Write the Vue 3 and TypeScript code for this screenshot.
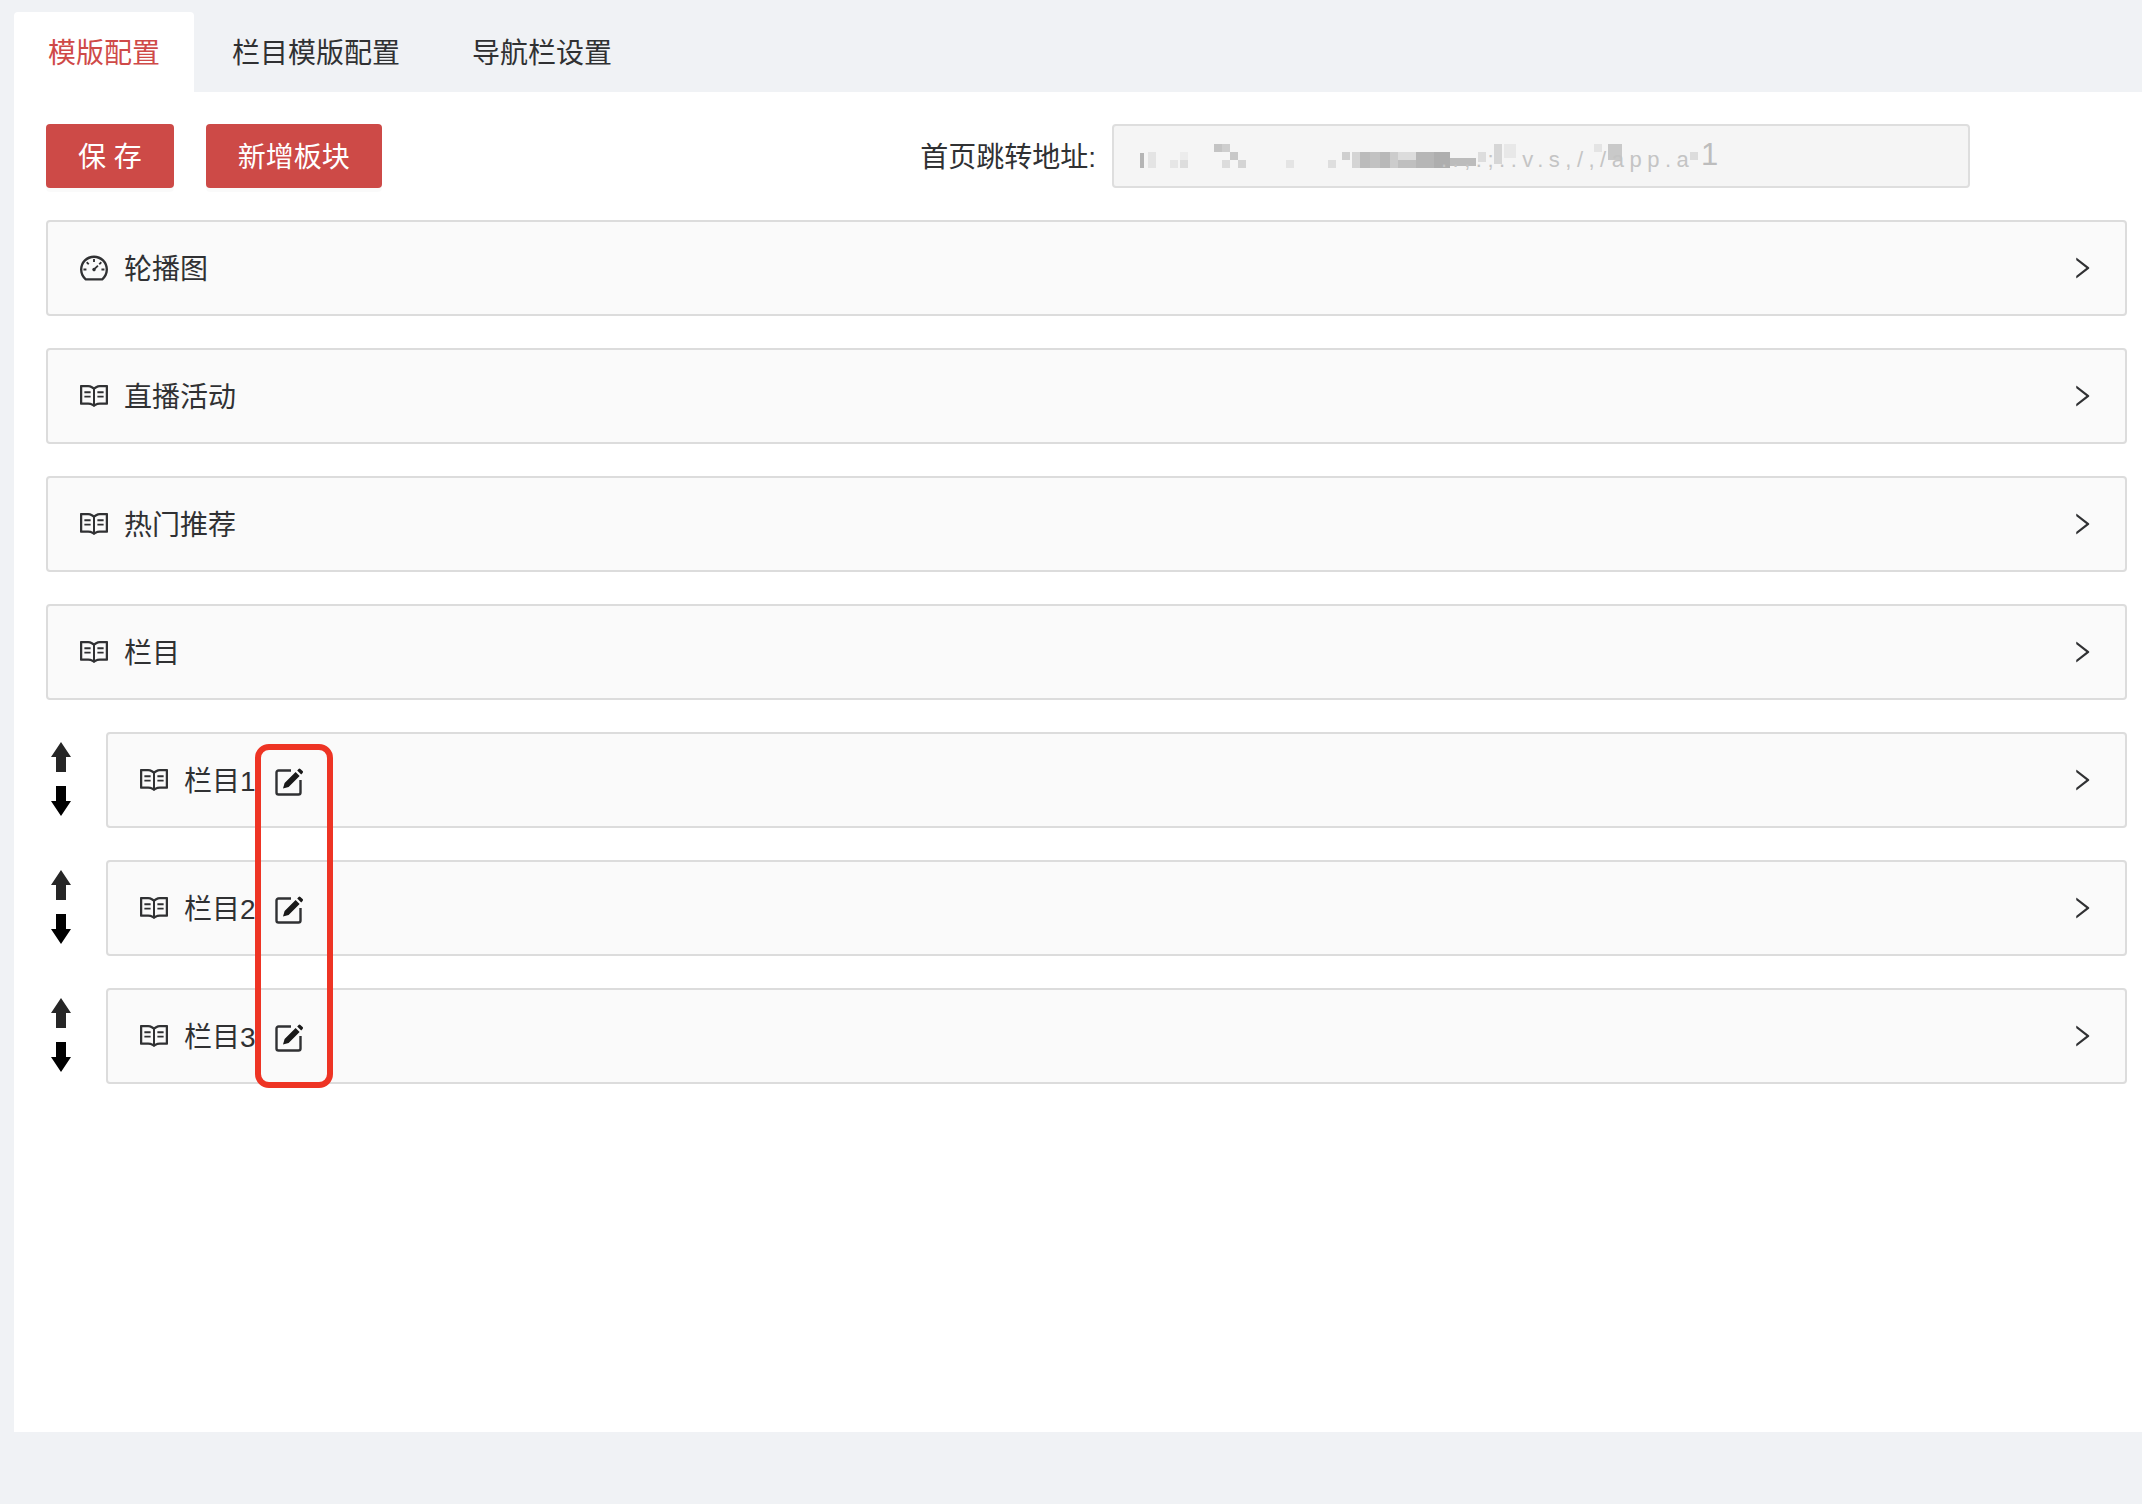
<script setup lang="ts">
const tabs = ['模版配置', '栏目模版配置', '导航栏设置']
const mainRows = ['直播活动', '热门推荐', '栏目']
const subRows = ['栏目1', '栏目2', '栏目3']
const dash = 'M924.8 385.6a446.7 446.7 0 0 0-96-142.4 446.7 446.7 0 0 0-142.4-96C631.1 123.8 572.5 112 512 112s-119.1 11.8-174.4 35.2a446.7 446.7 0 0 0-142.4 96 446.7 446.7 0 0 0-96 142.4C75.8 440.9 64 499.5 64 560c0 132.7 58.3 257.7 159.9 343.1l1.7 1.4c5.8 4.8 13.1 7.5 20.6 7.5h531.7c7.5 0 14.8-2.7 20.6-7.5l1.7-1.4C901.7 817.7 960 692.7 960 560c0-60.5-11.9-119.1-35.2-174.4zM761.4 836H262.6A371.12 371.12 0 0 1 140 560c0-99.4 38.7-192.8 109-263 70.3-70.3 163.7-109 263-109 99.4 0 192.8 38.7 263 109 70.3 70.3 109 163.7 109 263 0 105.6-44.5 205.5-122.6 276zM623.5 421.5a8.03 8.03 0 0 0-11.3 0L527.7 506c-18.7-5-39.4-.2-54.1 14.5a55.95 55.95 0 0 0 0 79.2 55.95 55.95 0 0 0 79.2 0 55.87 55.87 0 0 0 14.5-54.1l84.5-84.5c3.1-3.1 3.1-8.2 0-11.3l-28.3-28.3zM490 320h44c4.4 0 8-3.6 8-8v-80c0-4.4-3.6-8-8-8h-44c-4.4 0-8 3.6-8 8v80c0 4.4 3.6 8 8 8zM750 538v44c0 4.4 3.6 8 8 8h80c4.4 0 8-3.6 8-8v-44c0-4.4-3.6-8-8-8h-80c-4.4 0-8 3.6-8 8zM762.7 340.8l-31.1-31.1a8.03 8.03 0 0 0-11.3 0l-56.6 56.6a8.03 8.03 0 0 0 0 11.3l31.1 31.1c3.1 3.1 8.2 3.1 11.3 0l56.6-56.6c3.1-3.1 3.1-8.2 0-11.3zM304.1 309.7a8.03 8.03 0 0 0-11.3 0l-31.1 31.1a8.03 8.03 0 0 0 0 11.3l56.6 56.6c3.1 3.1 8.2 3.1 11.3 0l31.1-31.1c3.1-3.1 3.1-8.2 0-11.3l-56.6-56.6zM262 530h-80c-4.4 0-8 3.6-8 8v44c0 4.4 3.6 8 8 8h80c4.4 0 8-3.6 8-8v-44c0-4.4-3.6-8-8-8z'
const book = 'M928 161H699.2c-49.1 0-97.1 14.1-138.4 40.7L512 233l-48.8-31.3A255.2 255.2 0 0 0 324.8 161H96c-17.7 0-32 14.3-32 32v568c0 17.7 14.3 32 32 32h228.8c49.1 0 97.1 14.1 138.4 40.7l44.4 28.6c1.3.8 2.8 1.3 4.3 1.3s3-.4 4.3-1.3l44.4-28.6C602 807.1 650.1 793 699.2 793H928c17.7 0 32-14.3 32-32V193c0-17.7-14.3-32-32-32zM324.8 721H136V233h188.8c35.4 0 69.8 10.1 99.5 29.2l48.8 31.3 6.9 4.5v462c-47.6-25.6-100.8-39-155.2-39zm563.2 0H699.2c-54.4 0-107.6 13.4-155.2 39V298l6.9-4.5 48.8-31.3c29.7-19.1 64.1-29.2 99.5-29.2H888v488zM396.9 361H211.1c-3.9 0-7.1 3.4-7.1 7.5v45c0 4.1 3.2 7.5 7.1 7.5h185.7c3.9 0 7.1-3.4 7.1-7.5v-45c.1-4.1-3.1-7.5-7-7.5zm223.1 7.5v45c0 4.1 3.2 7.5 7.1 7.5h185.7c3.9 0 7.1-3.4 7.1-7.5v-45c0-4.1-3.2-7.5-7.1-7.5H627.1c-3.9 0-7.1 3.4-7.1 7.5zM396.9 501H211.1c-3.9 0-7.1 3.4-7.1 7.5v45c0 4.1 3.2 7.5 7.1 7.5h185.7c3.9 0 7.1-3.4 7.1-7.5v-45c.1-4.1-3.1-7.5-7-7.5zm416 0H627.1c-3.9 0-7.1 3.4-7.1 7.5v45c0 4.1 3.2 7.5 7.1 7.5h185.7c3.9 0 7.1-3.4 7.1-7.5v-45c.1-4.1-3.1-7.5-7-7.5z'
const chevron = 'M765.7 486.8L314.9 134.7A7.97 7.97 0 0 0 302 141v77.3c0 4.9 2.3 9.6 6.1 12.6l360 281.1-360 281.1c-3.9 3-6.1 7.7-6.1 12.6V883c0 6.7 7.7 10.4 12.9 6.3l450.8-352.1a31.96 31.96 0 0 0 0-50.4z'
// Mosaic over the redacted address: [x, y, w, h, fill]
const mosaic: [number, number, number, number, string][] = [
  [2, 9, 4, 15, '#b5b5b5'], [10, 8, 8, 16, '#e4e4e4'], [32, 16, 8, 8, '#e6e6e6'], [42, 8, 8, 8, '#ececec'],
  [42, 16, 8, 8, '#dddddd'], [76, 0, 8, 8, '#c4c4c4'], [84, 0, 8, 8, '#cecece'],
  [92, 8, 8, 8, '#c8c8c8'], [84, 16, 8, 8, '#dcdcdc'], [100, 16, 8, 8, '#d4d4d4'], [148, 16, 8, 8, '#e4e4e4'],
  [190, 16, 8, 8, '#dedede'], [204, 8, 8, 8, '#cfcfcf'], [214, 8, 8, 16, '#d4d4d4'], [222, 8, 10, 16, '#bbbbbb'],
  [232, 8, 10, 16, '#c2c2c2'], [242, 8, 10, 16, '#b8b8b8'], [252, 8, 8, 16, '#cccccc'], [260, 8, 18, 8, '#dcdcdc'],
  [260, 16, 18, 8, '#bfbfbf'], [278, 8, 18, 16, '#b6b6b6'], [296, 8, 16, 16, '#aeaeae'], [312, 14, 26, 8, '#bcbcbc'],
  [340, 8, 8, 10, '#dddddd'], [356, 0, 8, 20, '#d6d6d6'], [366, 0, 12, 14, '#e8e8e8'], [456, 0, 8, 8, '#e4e4e4'],
  [470, 0, 14, 16, '#c9c9c9'], [552, 8, 8, 8, '#dcdcdc'],
]
</script>

<template>
  <div class="page">
    <nav class="tabs">
      <div v-for="(tab, i) in tabs" :key="tab" class="tab" :class="{ active: i === 0 }">{{ tab }}</div>
    </nav>
    <main class="card">
      <div class="toolbar">
        <button class="btn">保 存</button>
        <button class="btn">新增板块</button>
        <div class="address">
          <label class="address-label">首页跳转地址:</label>
          <div class="address-input">
            <svg class="mosaic" width="560" height="26" viewBox="0 0 560 26" aria-hidden="true">
              <rect v-for="(r, i) in mosaic" :key="i" :x="r[0]" :y="r[1]" :width="r[2]" :height="r[3]" :fill="r[4]" />
            </svg>
            <span class="address-text">..,.;..v.s,/,/app.a</span>
            <span class="address-end">1</span>
          </div>
        </div>
      </div>

      <div class="list">
        <div class="panel">
          <svg class="icon" viewBox="0 0 1024 1024"><path :d="dash" /></svg>
          <span class="title">轮播图</span>
          <svg class="chevron" viewBox="0 0 1024 1024"><path :d="chevron" /></svg>
        </div>
        <div v-for="row in mainRows" :key="row" class="panel">
          <svg class="icon" viewBox="0 0 1024 1024"><path :d="book" /></svg>
          <span class="title">{{ row }}</span>
          <svg class="chevron" viewBox="0 0 1024 1024"><path :d="chevron" /></svg>
        </div>
        <div v-for="row in subRows" :key="row" class="sub-row">
          <div class="movers">
            <svg class="arrow up" viewBox="0 0 20 30"><path d="M10 0 20 15H15V30H5V15H0Z" /></svg>
            <svg class="arrow down" viewBox="0 0 20 30"><path d="M5 0H15V15H20L10 30 0 15H5Z" /></svg>
          </div>
          <div class="panel sub">
            <svg class="icon" viewBox="0 0 1024 1024"><path :d="book" /></svg>
            <span class="title">{{ row }}</span>
            <svg class="edit" viewBox="0 0 28 28">
              <path class="edit-box" d="M16 2.5H3.5a2 2 0 0 0-2 2v20a2 2 0 0 0 2 2h20a2 2 0 0 0 2-2V12" />
              <path class="edit-pen" d="M20.6 4 24.6 8 13.6 19 8 20.6 9.6 15ZM22.2 2.4 23.6.9a1.3 1.3 0 0 1 1.8 0L27.6 3.1a1.3 1.3 0 0 1 0 1.8L26.2 6.4Z" />
            </svg>
            <svg class="chevron" viewBox="0 0 1024 1024"><path :d="chevron" /></svg>
          </div>
        </div>
        <div class="highlight"></div>
      </div>
    </main>
  </div>
</template>

<style>
html, body { margin: 0; background: #f0f2f5; }
</style>

<style scoped>
.page {
  min-height: 1504px;
  background: #f0f2f5;
  font-family: "Liberation Sans", "Noto Sans CJK SC", sans-serif;
  font-size: 28px;
  color: #303133;
  box-sizing: border-box;
}
.tabs {
  display: flex;
  gap: 4px;
  height: 92px;
  padding: 12px 0 0 14px;
  box-sizing: border-box;
}
.tab {
  display: flex;
  align-items: center;
  padding: 0 34px 3px;
  border-radius: 4px 4px 0 0;
}
.tab.active { background: #fff; color: #cf4a48; }
.card {
  margin-left: 14px;
  height: 1340px;
  padding: 32px 15px 0 32px;
  background: #fff;
  box-sizing: border-box;
}
.toolbar {
  display: flex;
  align-items: flex-start;
  gap: 32px;
  height: 64px;
}
.btn {
  height: 64px;
  padding: 0 32px 2px;
  border: 0;
  border-radius: 4px;
  background: #cd4a47;
  box-shadow: 0 4px 0 rgba(0, 0, 0, 0.018);
  color: #fff;
  font: inherit;
}
.address {
  display: flex;
  align-items: center;
  gap: 16px;
  margin-left: auto;
  margin-right: 157px;
  height: 64px;
}
.address-label { padding-bottom: 2px; }
.address-input {
  position: relative;
  display: flex;
  align-items: center;
  width: 858px;
  height: 64px;
  padding-left: 24px;
  border: 2px solid #dedede;
  border-radius: 4px;
  background: #f5f5f5;
  box-sizing: border-box;
}
.mosaic { position: absolute; left: 24px; top: 18px; filter: blur(0.6px); }
.address-text {
  position: absolute;
  left: 327px;
  top: 21px;
  font-size: 22px;
  line-height: 26px;
  letter-spacing: 5.5px;
  color: #c4c4c4;
}
.address-end {
  position: absolute;
  left: 587px;
  top: 11px;
  font-size: 31px;
  line-height: 36px;
  color: #bdbdbd;
}
.list {
  position: relative;
  display: flex;
  flex-direction: column;
  gap: 32px;
  margin-top: 32px;
}
.sub-row { display: flex; }
.movers {
  display: flex;
  flex-direction: column;
  gap: 14px;
  width: 60px;
  padding: 10px 0 0 5px;
  box-sizing: border-box;
}
.arrow { display: block; width: 20px; height: 30px; }
.arrow.up { fill: #262626; }
.arrow.down { fill: #000; }
.panel {
  display: flex;
  align-items: center;
  height: 96px;
  padding: 0 29px 0 30px;
  border: 2px solid #dcdcdc;
  border-radius: 4px;
  background: #fafafa;
  box-sizing: border-box;
}
.panel.sub { flex: 1; }
.icon {
  flex: none;
  width: 32px;
  height: 32px;
  fill: #303133;
}
.title { margin-left: 14px; padding-bottom: 2px; white-space: nowrap; }
.edit {
  flex: none;
  width: 28px;
  height: 28px;
  margin: 4px 0 0 19px;
}
.edit-box { fill: none; stroke: #303133; stroke-width: 2.4; }
.edit-pen { fill: #1a1a1a; }
.chevron {
  flex: none;
  width: 28px;
  height: 28px;
  margin-left: auto;
  fill: #303133;
}
.highlight {
  position: absolute;
  left: 209px;
  top: 524px;
  width: 78px;
  height: 344px;
  border: 6px solid #ee3424;
  border-radius: 14px;
  box-sizing: border-box;
  pointer-events: none;
}
</style>
